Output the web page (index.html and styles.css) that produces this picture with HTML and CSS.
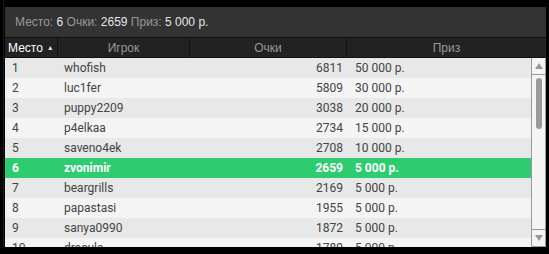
FILE: index.html
```html
<!DOCTYPE html>
<html>
<head>
<meta charset="utf-8">
<link rel="stylesheet" href="styles.css">
</head>
<body>
<div class="frame">
  <div class="panel">
    <div class="info">
      <span class="lbl">Место:</span>&nbsp;<span class="val">6</span>&nbsp;<span class="lbl">Очки:</span>&nbsp;<span class="val">2659</span>&nbsp;<span class="lbl">Приз:</span>&nbsp;<span class="val">5 000 р.</span>
    </div>
    <div class="head">
      <div class="hc c-rank active">Место <span class="arrow">▲</span></div>
      <div class="hc c-name">Игрок</div>
      <div class="hc c-pts">Очки</div>
      <div class="hc c-prize">Приз</div>
    </div>
    <div class="body">
      <div class="rows">
        <div class="row"><span class="rank">1</span><span class="name">whofish</span><span class="pts">6811</span><span class="prize">50 000 р.</span></div>
        <div class="row"><span class="rank">2</span><span class="name">luc1fer</span><span class="pts">5809</span><span class="prize">30 000 р.</span></div>
        <div class="row"><span class="rank">3</span><span class="name">puppy2209</span><span class="pts">3038</span><span class="prize">20 000 р.</span></div>
        <div class="row"><span class="rank">4</span><span class="name">p4elkaa</span><span class="pts">2734</span><span class="prize">15 000 р.</span></div>
        <div class="row"><span class="rank">5</span><span class="name">saveno4ek</span><span class="pts">2708</span><span class="prize">10 000 р.</span></div>
        <div class="row me"><span class="rank">6</span><span class="name">zvonimir</span><span class="pts">2659</span><span class="prize">5 000 р.</span></div>
        <div class="row"><span class="rank">7</span><span class="name">beargrills</span><span class="pts">2169</span><span class="prize">5 000 р.</span></div>
        <div class="row"><span class="rank">8</span><span class="name">papastasi</span><span class="pts">1955</span><span class="prize">5 000 р.</span></div>
        <div class="row"><span class="rank">9</span><span class="name">sanya0990</span><span class="pts">1872</span><span class="prize">5 000 р.</span></div>
        <div class="row"><span class="rank">10</span><span class="name">dracula</span><span class="pts">1789</span><span class="prize">5 000 р.</span></div>
      </div>
      <div class="scroll">
        <div class="sbtn up"><span class="tri-up"></span></div>
        <div class="track"><div class="thumb"></div></div>
        <div class="sbtn down"><span class="tri-down"></span></div>
      </div>
    </div>
  </div>
</div>
</body>
</html>
```

FILE: styles.css
```css
html, body {
  margin: 0;
  padding: 0;
  background: #000;
}
body {
  width: 549px;
  height: 254px;
  overflow: hidden;
}
.frame {
  margin-left: 3px;
  border-left: 1px solid #1c1c1c;
  padding-left: 1px;
  padding-top: 7px;
  height: 240px;
}
.panel {
  width: 541px;
}
.info {
  height: 30px;
  background: #333333;
  display: flex;
  align-items: center;
  padding-left: 10px;
  font-family: "Liberation Sans", Arial, sans-serif;
  font-size: 12px;
}
.info .lbl { color: #999999; }
.info .val { color: #e6e6e6; }
.head {
  display: flex;
  height: 19px;
  background: #222222;
  border-top: 1px solid #111111;
  border-bottom: 1px solid #111111;
  font-family: "Liberation Sans", Arial, sans-serif;
  font-size: 12px;
  color: #999999;
}
.hc {
  display: flex;
  align-items: center;
  justify-content: center;
  border-right: 1px solid #111111;
  box-sizing: border-box;
}
.hc.active {
  justify-content: flex-start;
  padding-left: 3px;
  color: #ffffff;
}
.arrow {
  font-size: 7px;
  margin-left: 4px;
  color: #dddddd;
}
.c-rank { width: 53px; }
.c-name { width: 132px; }
.c-pts { width: 157px; }
.c-prize { width: 199px; border-right: none; }
.body {
  display: flex;
  height: 189px;
  overflow: hidden;
}
.rows {
  width: 527px;
  font-family: Roboto, "Noto Sans", sans-serif;
  font-size: 12px;
  color: #444444;
}
.row {
  display: flex;
  align-items: center;
  height: 20px;
  background: #e8e8e8;
}
.row:nth-child(even) { background: #f4f4f4; }
.row.me {
  background: #2ecc71;
  color: #ffffff;
  font-weight: bold;
}
.rank { width: 53px; padding-left: 7px; box-sizing: border-box; }
.name { width: 132px; padding-left: 6px; box-sizing: border-box; }
.pts { width: 157px; padding-right: 4px; text-align: right; box-sizing: border-box; }
.prize { padding-left: 8px; }
.scroll {
  width: 15px;
  display: flex;
  flex-direction: column;
  background: #f4f4f4;
  border-left: 1px solid #999999;
  border-right: 1px solid #999999;
  box-sizing: border-box;
}
.sbtn {
  height: 16px;
  display: flex;
  align-items: center;
  justify-content: center;
}
.up { border-bottom: 1px solid #999999; }
.down { border-top: 1px solid #999999; border-bottom: 1px solid #999999; }
.tri-up {
  width: 0; height: 0;
  border-left: 4px solid transparent;
  border-right: 4px solid transparent;
  border-bottom: 6px solid #999999;
}
.tri-down {
  width: 0; height: 0;
  border-left: 4px solid transparent;
  border-right: 4px solid transparent;
  border-top: 6px solid #999999;
}
.track {
  flex: 1;
  display: flex;
  justify-content: center;
  padding-top: 3px;
}
.thumb {
  width: 6px;
  height: 51px;
  border-radius: 3px;
  background: #9a9a9a;
}
```
